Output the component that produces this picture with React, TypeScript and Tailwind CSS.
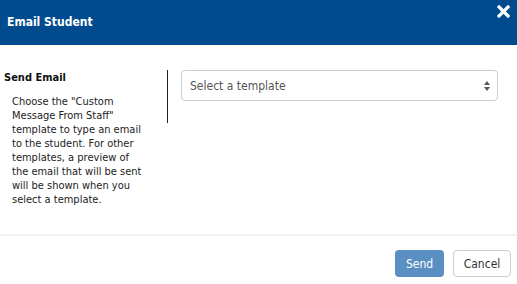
export default function App() {
  return (
    <div className="w-[517px] h-[284px] bg-white overflow-hidden" style={{ fontFamily: '"DejaVu Sans Condensed", "DejaVu Sans", Verdana, sans-serif' }}>
      {/* header */}
      <div className="h-[45px] bg-[#004b8d] flex items-start justify-between pl-[7px] pr-[7px]">
        <h1 className="mt-[14px] text-[12px] font-bold text-white leading-[16px]">Email Student</h1>
        <button className="mt-[5px] text-white">
          <svg width="13" height="13" viewBox="0 0 13 13">
            <path d="M2 2 L11 11 M11 2 L2 11" stroke="white" strokeWidth="3.2" strokeLinecap="square" />
          </svg>
        </button>
      </div>

      {/* body */}
      <div className="h-[191px] flex items-start pt-[25px] border-b-2 border-[#f2f2f2]">
        <div className="w-[167px] pl-[4px]">
          <div className="text-[11px] font-bold text-[#111] leading-[14px] mt-[1px]">Send Email</div>
          <p className="mt-[10px] ml-[8px] w-[134px] text-[11px] leading-[14px] text-[#222]">
            Choose the "Custom Message From Staff" template to type an email to the student. For other templates, a preview of the email that will be sent will be shown when you select a template.
          </p>
        </div>
        <div className="h-[53px] border-l border-[#222] pl-[13px]">
          <div className="w-[317px] h-[31px] border border-[#cccccc] rounded-[4px] flex items-center justify-between pl-[8px] pr-[7px]">
            <span className="text-[12px] text-[#555]">Select a template</span>
            <svg width="6" height="10" viewBox="0 0 6 10">
              <path d="M3 0 L6 4 L0 4 Z M0 6 L6 6 L3 10 Z" fill="#555" />
            </svg>
          </div>
        </div>
      </div>

      {/* footer */}
      <div className="flex justify-end gap-[9px] pt-[14px] pr-[6px]">
        <button className="w-[49px] h-[27px] rounded-[4px] bg-[#5a8fc3] text-white text-[12px]">Send</button>
        <button className="w-[58px] h-[27px] rounded-[4px] border border-[#cccccc] bg-white text-[#333] text-[12px]">Cancel</button>
      </div>
    </div>
  );
}
